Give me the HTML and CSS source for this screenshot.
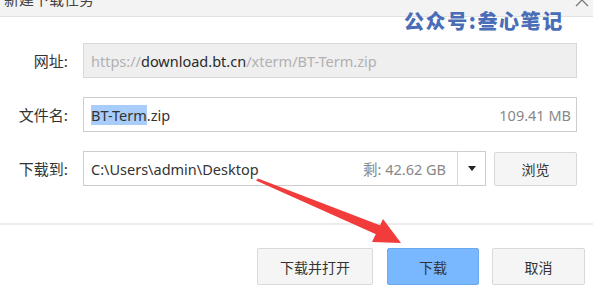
FILE: index.html
```html
<!DOCTYPE html>
<html lang="zh">
<head>
<meta charset="utf-8">
<title>新建下载任务</title>
<link rel="stylesheet" href="styles.css">
</head>
<body>
<div class="dialog">
  <div class="titlebar">
    <span class="title">新建下载任务</span>
    <svg class="close" width="16" height="16" viewBox="0 0 16 16"><path d="M2 2 L14 14 M14 2 L2 14" stroke="#7a7a7a" stroke-width="1.3" fill="none"/></svg>
  </div>
  <div class="form">
    <div class="row">
      <span class="label">网址:</span>
      <div class="field field-disabled"><span class="muted">https://</span><span class="dark">download.bt.cn</span><span class="muted">/xterm/BT-Term.zip</span></div>
    </div>
    <div class="row">
      <span class="label">文件名:</span>
      <div class="field"><span class="text"><span class="sel">BT-Term</span>.zip</span><span class="info">109.41 MB</span></div>
    </div>
    <div class="row">
      <span class="label">下载到:</span>
      <div class="pathgroup">
        <div class="combo">
          <div class="field field-combo"><span class="text">C:\Users\admin\Desktop</span><span class="info">剩: 42.62 GB</span></div>
          <div class="drop"><span class="tri"></span></div>
        </div>
        <button class="btn btn-browse">浏览</button>
      </div>
    </div>
  </div>
  <div class="sep"></div>
  <div class="footer">
    <button class="btn btn-foot">下载并打开</button>
    <button class="btn btn-foot btn-primary">下载</button>
    <button class="btn btn-foot">取消</button>
  </div>
  <div class="watermark">公众号:叁心笔记</div>
  <svg class="arrow" width="593" height="304" viewBox="0 0 593 304">
    <polygon points="256,180.5 258,178.6 380.5,225.5 376.5,234.5" fill="#f23b3b"/>
    <polygon points="401,243 372,242 383,219" fill="#f23b3b"/>
  </svg>
</div>
</body>
</html>
```

FILE: styles.css
```css
* { box-sizing: border-box; }
html, body { margin: 0; padding: 0; background: #fff; }
body {
  width: 593px;
  height: 304px;
  overflow: hidden;
  font-family: "Noto Sans", "Noto Sans CJK SC", sans-serif;
  font-size: 14px;
  color: #333;
}
.dialog {
  position: relative;
  width: 593px;
  height: 304px;
  display: flex;
  flex-direction: column;
}
.titlebar {
  height: 17px;
  flex: none;
  background: #f3f3f3;
  border-bottom: 1px solid #e2e2e2;
  display: flex;
  align-items: flex-end;
  justify-content: space-between;
  overflow: hidden;
  padding: 0 3px 0 4px;
}
.title {
  font-family: "Noto Sans CJK SC", sans-serif;
  font-size: 15px;
  line-height: 20px;
  color: #444;
  margin-bottom: 7px;
}
.close {
  margin-bottom: 8px;
}
.form {
  padding: 26px 16px 0 0;
  display: flex;
  flex-direction: column;
  gap: 19px;
}
.row {
  display: grid;
  grid-template-columns: 68px 1fr;
  column-gap: 15px;
  align-items: center;
  height: 35px;
}
.label {
  text-align: right;
  font-family: "Noto Sans CJK SC", sans-serif;
  font-size: 15px;
  color: #333;
}
.field {
  height: 35px;
  border: 1px solid #cdcdcd;
  background: #fff;
  display: flex;
  align-items: center;
  justify-content: space-between;
  padding: 0 5px 0 7px;
  font-size: 14.5px;
  white-space: nowrap;
}
.field-disabled {
  background: #efefef;
  border-color: #d8d8d8;
  justify-content: flex-start;
}
.muted { color: #b1b1b1; }
.dark { color: #2a2a2a; }
.text { color: #333; }
.sel { background: #a9cdfb; }
.info { color: #888; }
.pathgroup {
  display: flex;
  align-items: center;
  gap: 8px;
}
.combo {
  display: flex;
  width: 403px;
  height: 35px;
}
.field-combo {
  flex: 1;
  padding-right: 11px;
}
.drop {
  width: 29px;
  height: 35px;
  border: 1px solid #cdcdcd;
  border-left: 1px solid #d6d6d6;
  margin-left: -1px;
  display: flex;
  align-items: center;
  justify-content: center;
  background: #fff;
}
.tri {
  width: 0;
  height: 0;
  border-left: 4px solid transparent;
  border-right: 4px solid transparent;
  border-top: 5px solid #222;
}
.btn {
  font-family: "Noto Sans CJK SC", sans-serif;
  font-size: 14px;
  color: #333;
  background: #f5f5f5;
  border: 1px solid #d9d9d9;
  border-radius: 2px;
  padding: 0;
}
.btn-browse {
  width: 83px;
  height: 34px;
}
.sep {
  margin-top: 37px;
  height: 2px;
  background: #ececec;
  flex: none;
}
.footer {
  display: flex;
  justify-content: flex-end;
  gap: 14px;
  padding: 23px 8px 0 0;
}
.btn-foot {
  height: 37px;
}
.btn-foot:nth-child(1) { width: 116px; }
.btn-foot:nth-child(2) { width: 92px; }
.btn-foot:nth-child(3) { width: 93px; margin-left: -1px; }
.btn-primary {
  background: #79b8fe;
  border-color: #6aa9ef;
}
.watermark {
  position: absolute;
  left: 404px;
  top: 9px;
  font-family: "Noto Sans CJK SC", sans-serif;
  font-weight: 900;
  font-size: 20px;
  line-height: 24px;
  color: #4a6db8;
  letter-spacing: 1.6px;
}
.arrow {
  position: absolute;
  left: 0;
  top: 0;
  pointer-events: none;
}
```
